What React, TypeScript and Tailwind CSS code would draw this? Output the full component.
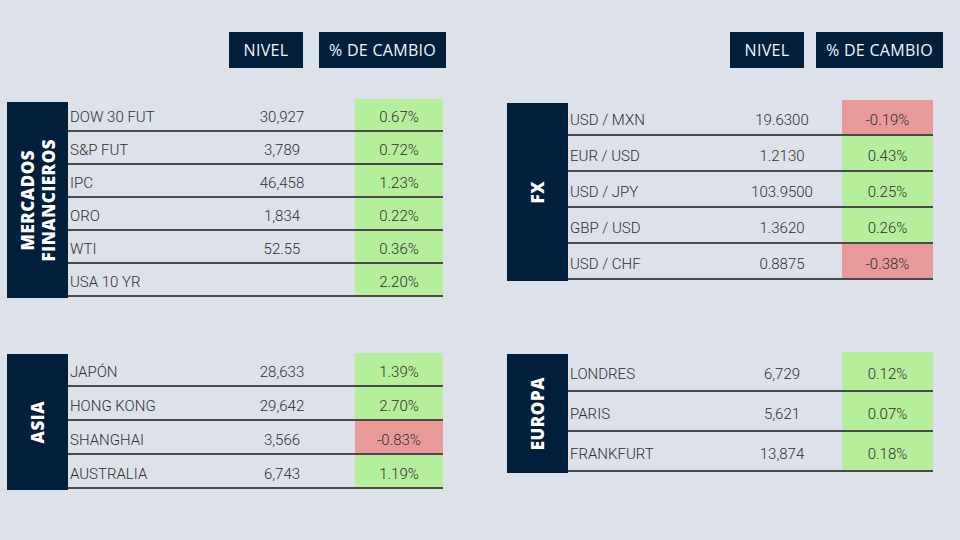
import React from "react";

type Row = { name: string; value: string; pct: string; neg?: boolean };

const mercados: Row[] = [
  { name: "DOW 30 FUT", value: "30,927", pct: "0.67%" },
  { name: "S&P FUT", value: "3,789", pct: "0.72%" },
  { name: "IPC", value: "46,458", pct: "1.23%" },
  { name: "ORO", value: "1,834", pct: "0.22%" },
  { name: "WTI", value: "52.55", pct: "0.36%" },
  { name: "USA 10 YR", value: "", pct: "2.20%" },
];
const fx: Row[] = [
  { name: "USD / MXN", value: "19.6300", pct: "-0.19%", neg: true },
  { name: "EUR / USD", value: "1.2130", pct: "0.43%" },
  { name: "USD / JPY", value: "103.9500", pct: "0.25%" },
  { name: "GBP / USD", value: "1.3620", pct: "0.26%" },
  { name: "USD / CHF", value: "0.8875", pct: "-0.38%", neg: true },
];
const asia: Row[] = [
  { name: "JAPÓN", value: "28,633", pct: "1.39%" },
  { name: "HONG KONG", value: "29,642", pct: "2.70%" },
  { name: "SHANGHAI", value: "3,566", pct: "-0.83%", neg: true },
  { name: "AUSTRALIA", value: "6,743", pct: "1.19%" },
];
const europa: Row[] = [
  { name: "LONDRES", value: "6,729", pct: "0.12%" },
  { name: "PARIS", value: "5,621", pct: "0.07%" },
  { name: "FRANKFURT", value: "13,874", pct: "0.18%" },
];

const dataFont = { fontFamily: "Roboto, 'DejaVu Sans', sans-serif" };
const headFont = { fontFamily: "'Open Sans', 'DejaVu Sans', sans-serif" };

function Header({ left }: { left: boolean }) {
  return (
    <div
      className={left ? "flex pl-[229px] gap-[16px]" : "flex pl-[230px] gap-[12px]"}
      style={headFont}
    >
      <div className="w-[74px] h-[36px] bg-[#011e3a] text-[#f4f6fa] text-[16px] tracking-[0.3px] flex items-center justify-center">
        NIVEL
      </div>
      <div className="w-[127px] h-[36px] bg-[#011e3a] text-[#f4f6fa] text-[16px] tracking-[0.3px] flex items-center justify-center">
        % DE CAMBIO
      </div>
    </div>
  );
}

function DataRow({ r, left, h }: { r: Row; left: boolean; h: string }) {
  return (
    <div
      className={`flex border-b-2 border-[#4a4a4a] text-[15px] font-light text-[#2e2e2e] ${h}`}
      style={dataFont}
    >
      <div className="w-[162px] pl-[2px] flex items-center pt-[6px]">{r.name}</div>
      <div className="w-[104px] flex items-center justify-center pt-[6px]">{r.value}</div>
      <div className={left ? "w-[21px]" : "w-[8px]"} />
      <div
        className={`${left ? "w-[88px]" : "w-[91px]"} flex items-center justify-center pt-[6px] ${
          r.neg ? "bg-[#e89a98]" : "bg-[#b5ef9c]"
        }`}
      >
        {r.pct}
      </div>
    </div>
  );
}

function Label({ lines, cls }: { lines: string[]; cls: string }) {
  return (
    <div className={`w-[61px] bg-[#011e3a] flex items-center justify-center ${cls}`}>
      <div
        className="[writing-mode:vertical-rl] rotate-180 text-white font-extrabold text-[17px] tracking-[0.5px] leading-[21px] text-center"
        style={headFont}
      >
        {lines.map((l) => (
          <div key={l}>{l}</div>
        ))}
      </div>
    </div>
  );
}

function Table({
  rows,
  label,
  left,
  rowH,
  labelCls,
}: {
  rows: Row[];
  label: string[];
  left: boolean;
  rowH: string;
  labelCls: string;
}) {
  return (
    <div className="flex items-start ml-[7px]">
      <Label lines={label} cls={labelCls} />
      <div className={left ? "w-[375px] flex flex-col" : "w-[365px] flex flex-col"}>
        {rows.map((r) => (
          <DataRow key={r.name} r={r} left={left} h={rowH} />
        ))}
      </div>
    </div>
  );
}

export default function App() {
  return (
    <div className="w-[960px] h-[540px] bg-[#dde1ea] flex overflow-hidden">
      <div className="w-[500px] flex flex-col pt-[32px]">
        <Header left={true} />
        <div className="mt-[31px]">
          <Table
            rows={mercados}
            label={["MERCADOS", "FINANCIEROS"]}
            left={true}
            rowH="h-[33px]"
            labelCls="mt-[3px] h-[196px]"
          />
        </div>
        <div className="mt-[55px]">
          <Table rows={asia} label={["ASIA"]} left={true} rowH="h-[34px]" labelCls="mt-[1px] h-[136px]" />
        </div>
      </div>
      <div className="w-[460px] flex flex-col pt-[32px]">
        <Header left={false} />
        <div className="mt-[32px]">
          <Table rows={fx} label={["FX"]} left={false} rowH="h-[36px]" labelCls="mt-[3px] h-[178px]" />
        </div>
        <div className="mt-[71px]">
          <Table rows={europa} label={["EUROPA"]} left={false} rowH="h-[40px]" labelCls="mt-[2px] h-[119px]" />
        </div>
      </div>
    </div>
  );
}
